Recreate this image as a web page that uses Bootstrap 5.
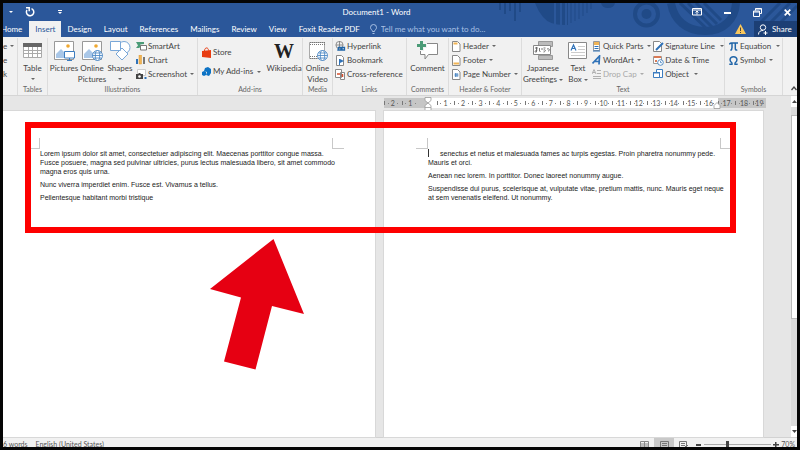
<!DOCTYPE html>
<html lang="en">
<head>
<meta charset="utf-8">
<meta name="viewport" content="width=device-width, initial-scale=1">
<title>Document1 - Word</title>
<link href="https://cdn.jsdelivr.net/npm/bootstrap@5.3.0/dist/css/bootstrap.min.css" rel="stylesheet">
<style>
:root{--word:#2b579a;--ink:#444}
body{font-family:Lato,"Open Sans",sans-serif;font-size:8px;line-height:11px;color:var(--ink);background:#000}
.app{height:100vh;border:3px solid #050505;background:#f1f1f1}
button{border:0;background:none;padding:0;color:inherit;font:inherit;white-space:nowrap}
svg{display:block;flex:none}
.topbar{background:var(--word);color:#fff}
.art{right:0;top:0;height:34px;width:310px}
.titlebar{height:18px}
.side{flex:1 1 0}
.quick{gap:10px;padding-left:4px;margin-right:-45px}
.quick .last-item{margin-left:12px}
.winctl{gap:22px;padding-right:6px}
.tabs{height:16px}
.tab{padding:0 6px;height:16px;color:#fff;text-decoration:none;display:flex;align-items:center}
.tab.home{padding:0 7px 0 0;margin-left:-2px}
.tab.active{background:#f1f1f1;color:var(--word)}
.tell{border:0;background:none;color:#fff;font:inherit;padding:0;width:120px;outline:0}
.tell::placeholder{color:#a9c0e4;opacity:1}
.share{background:#1c3f75;width:43px}
.ribbon{display:grid;grid-template-columns:minmax(0,15fr) minmax(0,30fr) minmax(0,150fr) minmax(0,105fr) minmax(0,30fr) minmax(0,74fr) minmax(0,42fr) minmax(0,73fr) minmax(0,203fr) minmax(0,58fr) minmax(0,14fr);height:59px;border-bottom:1px solid #d5d5d5;padding-top:1px}
.group{display:flex;flex-direction:column;border-right:1px solid #dcdcdc;min-width:0}
.group:last-child{border:0}
.tools{display:flex;height:47px;padding-top:1px}
.tools.near{padding-left:2px}
.caption{font-size:7px;line-height:9px;text-align:center;color:#666;white-space:nowrap}
.big{display:flex;flex-direction:column;align-items:center;width:28px;padding-top:2px}
.big.wide{width:42px}
.big.wiki{width:36px}
.big svg{margin-bottom:2px}
.big span{display:block;white-space:nowrap}
.big .serif-w{font:bold 20px/20px "Liberation Serif",serif;color:#222;margin-bottom:2px}
.stack button{display:flex;align-items:center;height:14px;gap:1px}
.stack.tall button{height:19px;gap:2px}
.stack.tall{padding-top:4px}
.stack.shift{margin-left:2px}
.caret{display:inline-block;border:2px solid transparent;border-top-color:#666;border-bottom:0;width:4px;height:2px;margin-left:2px;vertical-align:middle}
.big .caret{margin:4px 0 0}
.big span .caret{margin:0 0 0 2px}
.off{color:#a9a9a9}
.work{background:#e6e6e6;min-height:0}
.rulerrow{display:grid;grid-template-columns:381fr 382fr 25fr;height:15px;padding-top:2px}
.ruler{display:flex;height:10px;font-size:7px;line-height:10px;text-align:center;color:#555}
.ruler span{flex:4 1 0;min-width:0;background:linear-gradient(#777,#777) 0 50%/1px 4px no-repeat,linear-gradient(#888,#888) 22% 50%/1px 1px no-repeat,linear-gradient(#888,#888) 80% 50%/1px 1px no-repeat,#fff}
.ruler .out{background-color:#c6c6c6}
.ruler .zero{background:linear-gradient(90deg,#c6c6c6 50%,#fff 50%)}
.ruler .zero svg{margin:-1px auto 0}
.ruler .edge{display:flex}
.ruler .edge svg{margin:4px 0 0 -5px}
.ruler .edge b{font-weight:400;flex:1;margin-left:-3px}
.ruler .last{flex-grow:3}
.pages{display:grid;grid-template-columns:372fr 9fr 379fr 28fr;min-height:0}
.sheet{background:#fff;font-family:"Liberation Sans",Arial,sans-serif;font-size:7px;line-height:9px;color:#222;padding:27px 0 0 25px;box-shadow:0 0 0 1px #d8d8d8}
.sheet.right{padding-left:32px}
.sheet p{margin:0 0 4px 12px;white-space:nowrap}
.crops{display:flex;justify-content:space-between;width:316px;height:11px}
.crops i{width:12px;border:1px solid #c8c8c8;border-width:0 1px 1px 0}
.crops i+i{border-width:0 0 1px 1px}
.cursor{display:inline-block;width:1px;height:8px;background:#333;margin-right:11px;vertical-align:top}
.scroller{width:6px;background:#dadada}
.scroller button{height:11px;background:#fff;display:flex;align-items:center;justify-content:center}
.thumb{background:#fff;border:1px solid #bbb;border-right:0;height:204px;margin-top:8px}
.status{height:10px;border-top:1px solid #d2d2d2;font-size:7px;line-height:13px;overflow:hidden;color:#555}
.status button{height:13px;display:flex;align-items:center;justify-content:center}
.view{width:20px}
.view.on{background:#c9c9c9}
.zoomgroup{gap:2px;padding-right:2px}
.zoomer{appearance:none;width:67px;height:13px;background:linear-gradient(#aaa,#aaa) 50% 50%/100% 1px no-repeat;margin:0}
.zoomer::-webkit-slider-thumb{appearance:none;width:3px;height:7px;background:#444}
.frame-note{left:22px;right:61px;top:26px;height:111px;border:6px solid #fe0000;pointer-events:none}
.arrow-note{left:207px;top:142px;pointer-events:none}
</style>
<script src="https://cdn.jsdelivr.net/npm/bootstrap@5.3.0/dist/js/bootstrap.bundle.min.js"></script>
</head>
<body>
<div class="app d-flex flex-column overflow-hidden">
<header class="topbar position-relative">
  <svg class="art position-absolute" viewBox="487 3 310 34" fill="none" stroke="#204a87" aria-hidden="true">
    <path stroke-width="2" d="M500 3v7M505 3v11M510 3v8M515 3v18M520 3v9"/>
    <path fill="#204a87" stroke="none" d="M535 3h33v22q-18 1-25-8q-5-6-8-14zM601 3h14q-1 5-7 5t-7-5z"/>
    <path stroke-width="1" d="M571 3v20M575 3v18M579 3v16M583 3v13M587 3v10M591 3v6"/>
    <path stroke="#2b579a" stroke-width="2" d="M555 3v24M561 3v24M566 3v24"/>
    <circle cx="646.500" cy="14" r="11.500" stroke-width="4"/><circle cx="646.500" cy="14" r="5" fill="#204a87" stroke="none"/>
    <path stroke-width="8" d="M671 3c3 17 15 28 34 28s30-12 31-28"/>
    <path stroke-width="3" d="M680 3l28 27M688 3l24 24M696 3l21 21M704 3l17 17M759 24l21-21M767 26l23-23M775 28l22-22"/>
  </svg>
  <div class="titlebar d-flex align-items-center position-relative">
    <div class="side quick d-flex align-items-center">
      <button aria-label="Undo options"><svg width="8" height="6"><path fill="#fff" d="M2 2h4L4 4z"/></svg></button>
      <button aria-label="Repeat"><svg width="10" height="10" viewBox="0 0 10 10" fill="none" stroke="#fff" stroke-width="1.500"><path d="M6.500 1.600A3.700 3.700 0 1 1 2 3M1 .8h3.200v3.400"/></svg></button>
      <button class="last-item" aria-label="Customize toolbar"><svg width="6" height="7"><path fill="#fff" d="M1 1h4v1H1zM1 3h4L3 5z"/></svg></button>
    </div>
    <div>Document1 - Word</div>
    <div class="side winctl d-flex justify-content-end align-items-center">
      <button aria-label="Ribbon display options"><svg width="10" height="8" viewBox="0 0 10 8" fill="none" stroke="#fff"><path d="M.5.500h9v6.500h-9zM.5 2h9M5 6.500V3M3.500 4.500L5 3l1.500 1.500"/></svg></button>
      <button aria-label="Minimize"><svg width="7" height="8"><path fill="#fff" d="M0 4h7v2H0z"/></svg></button>
      <button aria-label="Restore"><svg width="9" height="9" viewBox="0 0 9 9" fill="none" stroke="#fff"><path d="M2.500 2.500v-2h6v5h-2M.5 3h6v5.500h-6zM.5 4h6M2.500 1h6"/></svg></button>
      <button aria-label="Close"><svg width="7" height="7" viewBox="0 0 7 7" stroke="#fff" stroke-width="1.700"><path d="M.7.7l5.600 5.600M6.300.7L.7 6.300"/></svg></button>
    </div>
  </div>
  <nav class="tabs d-flex position-relative" aria-label="Ribbon tabs">
    <a class="tab home" href="#">Home</a><a class="tab active" href="#" aria-current="page">Insert</a><a class="tab" href="#">Design</a><a class="tab" href="#">Layout</a><a class="tab" href="#">References</a><a class="tab" href="#">Mailings</a><a class="tab" href="#">Review</a><a class="tab" href="#">View</a><a class="tab" href="#">Foxit Reader PDF</a>
    <label class="d-flex align-items-center gap-1 ms-1"><svg width="7" height="11" viewBox="0 0 7 11" fill="none" stroke="#a9c0e4"><path d="M2.500 7.500c0-1.500-2-2-2-4a3 3 0 0 1 6 0c0 2-2 2.500-2 4zM2.500 9.500h2"/></svg><input class="tell" placeholder="Tell me what you want to do..." aria-label="Tell me what you want to do"></label>
    <div class="d-flex align-items-center ms-auto">
      <svg class="me-2" width="11" height="10" viewBox="0 0 11 10"><path fill="#f8c65c" d="M5.500 0L11 10H0z"/><path stroke="#444" d="M5.500 3.500V7M5.500 8v1"/></svg>
      <button class="share h-100 d-flex align-items-center gap-1 ps-1"><svg width="10" height="11" viewBox="0 0 10 11" fill="none" stroke="#fff"><circle cx="5" cy="3.500" r="2.700"/><path d="M.5 10.500c0-3 2-4 4.500-4M5.500 9h4M7.500 7v4"/></svg>Share</button>
    </div>
  </nav>
</header>

<section class="ribbon" aria-label="Insert ribbon">
  <div class="group"><div class="tools stack flex-column align-items-start">
    <button>e<i class="caret"></i></button><button>e</button><button>k</button></div></div>

  <div class="group"><div class="tools justify-content-center">
    <button class="big"><svg width="19" height="20" viewBox="0 0 19 20"><path fill="#fff" stroke="#aaa" d="M.5 3.500h18v13H.5z"/><path fill="#666" d="M0 2h19v4H0z"/><path stroke="#aaa" d="M1 9.500h17M1 12.500h17M5.500 6v10M9.500 6v10M14.500 6v10"/></svg><span>Table</span><i class="caret"></i></button></div>
    <div class="caption">Tables</div></div>

  <div class="group"><div class="tools near">
    <button class="big"><svg width="21" height="20" viewBox="0 0 21 20"><path fill="#fff" stroke="#999" d="M.5.500h19v18H.5z"/><circle cx="14" cy="5" r="1.800" fill="#f0a830"/><path fill="#a9c7e8" d="M2 17v-4l5-5 4 4v5z"/><path fill="#fff" stroke="#3c7dc0" d="M10.500 10.500h10v6.500h-10zM15.500 17v2M13 19.500h5"/></svg><span>Pictures</span></button>
    <button class="big"><svg width="21" height="20" viewBox="0 0 21 20"><path fill="#fff" stroke="#999" d="M.5.500h19v18H.5z"/><circle cx="14" cy="5" r="1.800" fill="#f0a830"/><path fill="#a9c7e8" d="M2 17v-4l5-5 4 4v5z"/><g fill="#fff" stroke="#3c7dc0" stroke-width=".8"><circle cx="15.500" cy="14.500" r="5"/><ellipse cx="15.500" cy="14.500" rx="2.200" ry="5"/><path d="M10.500 14.500h10M11.500 12h8M11.500 17h8"/></g></svg><span>Online</span><span>Pictures</span></button>
    <button class="big"><svg width="21" height="20" viewBox="0 0 21 20" fill="#fff" stroke="#79a7d8"><circle cx="14" cy="6.500" r="6"/><path d="M.5.500h10v9H.5zM12 7l6 6-6 6-6-6z"/></svg><span>Shapes</span><i class="caret"></i></button>
    <div class="stack shift">
      <button><svg width="11" height="10" viewBox="0 0 11 10"><path fill="#4b9b77" d="M0 1h8v2l-4 .5L6 5 3 7H0l2-2.500z"/><path fill="#fff" stroke="#777" d="M4.500 4.500h6V9h-6z"/></svg>SmartArt</button>
      <button><svg width="11" height="10" viewBox="0 0 11 10"><path fill="#2f72b8" d="M0 4h2v5H0z"/><path fill="#f1b455" stroke="#dc9a30" stroke-width=".5" d="M3 0h2.500v9H3z"/><path fill="#777" d="M7 2h2v7H7z"/></svg>Chart</button>
      <button><svg width="11" height="11" viewBox="0 0 11 11"><path fill="#fff" stroke="#ccc" d="M1.500.500h8v6h-8z"/><path fill="#444" d="M0 5h2l1-1h1l1 1h2v5H0z"/><circle cx="3.500" cy="7.500" r="1.300" fill="#fff"/><path fill="#2f72b8" d="M8.500 8h2v2h-2z"/></svg>Screenshot<i class="caret"></i></button>
    </div></div>
    <div class="caption">Illustrations</div></div>

  <div class="group"><div class="tools ps-1">
    <div class="stack tall">
      <button><svg width="9" height="11" viewBox="0 0 9 11"><path fill="#e83c12" d="M0 4l9-1v8l-9-1z"/><path fill="none" stroke="#e83c12" d="M2.500 4c0-4 4-4 4-.5"/></svg>Store</button>
      <button><svg width="9" height="10" viewBox="0 0 9 10"><path fill="#0d73c5" d="M3 1l3-1 3 2v4L7 9l-3-1 1-3-3-1zM0 5l2-1 2 1v3l-2 1-2-1z"/></svg>My Add-ins<i class="caret"></i></button>
    </div>
    <button class="big wiki ms-auto"><span class="serif-w">W</span><span>Wikipedia</span></button></div>
    <div class="caption">Add-ins</div></div>

  <div class="group"><div class="tools justify-content-center">
    <button class="big"><svg width="20" height="20" viewBox="0 0 20 20"><path fill="#fff" stroke="#aaa" d="M1.500 1.500h15v16h-15z"/><path stroke="#777" stroke-dasharray="1 1" d="M2 1.500h15M2 3.500h15M2 15.500h8M2 17.500h8"/><g fill="#fff" stroke="#3c7dc0" stroke-width=".8"><circle cx="14.500" cy="14.500" r="5"/><ellipse cx="14.500" cy="14.500" rx="2.200" ry="5"/><path d="M9.500 14.500h10M10.500 12h8M10.500 17h8"/></g></svg><span>Online</span><span>Video</span></button></div>
    <div class="caption">Media</div></div>

  <div class="group"><div class="tools near"><div class="stack">
      <button><svg width="11" height="10" viewBox="0 0 11 10" fill="none"><g stroke="#777" stroke-width=".8"><circle cx="4.500" cy="4" r="3.600"/><path d="M1 4h7M4.500 0v7.500"/></g><path stroke="#2065a8" stroke-width="1.300" d="M3.500 6.500h2.500v2.500H3zM7 6.500h2.500v2.500H7z"/></svg>Hyperlink</button>
      <button><svg width="11" height="11" viewBox="0 0 11 11"><path fill="#fff" stroke="#888" d="M1.500.500h5l2 2v8h-7z"/><path fill="#2f72b8" d="M4 4h1v6H4zM5 4l4 2-4 2z"/></svg>Bookmark</button>
      <button><svg width="11" height="11" viewBox="0 0 11 11"><path fill="#fff" stroke="#888" d="M.5.500h6v8h-6zM5.500 3.500h4v7h-4z"/><path stroke="#d8502e" stroke-width="1.500" d="M2 5h3M7.500 5v3"/></svg>Cross-reference</button>
    </div></div>
    <div class="caption">Links</div></div>

  <div class="group"><div class="tools justify-content-center">
    <button class="big"><svg width="21" height="20" viewBox="0 0 21 20"><path fill="#fff" stroke="#888" d="M3.500 2.500h17v11h-9L8 18v-4.500H3.500z"/><path stroke="#f1f1f1" stroke-width="5" d="M4.500 0v10M0 4.500h10"/><path stroke="#4b9b77" stroke-width="3" d="M4.500 0v9M0 4.500h9"/></svg><span>Comment</span></button></div>
    <div class="caption">Comments</div></div>

  <div class="group"><div class="tools near"><div class="stack">
      <button><svg width="11" height="11" viewBox="-1 0 11 11"><path fill="#fff" stroke="#888" d="M.5.500h5l2.500 2.500v7.500H.5z"/><path fill="#f1b455" d="M1.500 1.500h4v2h-4z"/></svg>Header<i class="caret"></i></button>
      <button><svg width="11" height="11" viewBox="-1 0 11 11"><path fill="#fff" stroke="#888" d="M.5.500h5l2.500 2.500v7.500H.5z"/><path fill="#f1b455" d="M1.500 7.500h5.500v2H1.500z"/></svg>Footer<i class="caret"></i></button>
      <button><svg width="11" height="11" viewBox="-1 0 11 11"><path fill="#fff" stroke="#888" d="M.5.500h5l2.500 2.500v7.500H.5z"/><path stroke="#2f72b8" stroke-width=".7" d="M3.500 4v4M5 4v4M2.500 5.200h4M2.500 6.800h4"/></svg>Page Number<i class="caret"></i></button>
    </div></div>
    <div class="caption">Header &amp; Footer</div></div>

  <div class="group"><div class="tools">
    <button class="big wide"><svg width="20" height="20" viewBox="0 0 20 20"><path fill="#bbb" stroke="#999" d="M5.500.500h14v5h-14zM5.500 14.500h14v4h-14z"/><path fill="#fff" stroke="#888" d="M.5 4.500h17v9H.5z"/><path fill="none" stroke="#555" stroke-width=".8" d="M2 7h3M3.500 6v5c-2 1-2-2 1-2M6.500 7v3l1 1M9 7v2M10.500 7h2M10.500 9c3-1 2 2 0 2M14 8c3-1 3 2 1 2"/></svg><span>Japanese</span><span>Greetings<i class="caret"></i></span></button>
    <button class="big"><svg width="20" height="20" viewBox="0 0 20 20"><path fill="#fff" stroke="#888" d="M.5 1.500h18v16H.5z"/><path fill="none" stroke="#2f72b8" stroke-width="1.200" d="M3 9.500L5.500 4 8 9.500M4 7.500h3"/><path stroke="#ccc" d="M10 5.500h7M10 8.500h7M3 11.500h14M3 14.500h14"/></svg><span>Text</span><span>Box<i class="caret"></i></span></button>
    <div class="stack">
      <button><svg width="10" height="11" viewBox="0 0 10 11"><path fill="#fff" stroke="#999" d="M1.500.500h6v9h-6z"/><path fill="#f1b455" d="M2 1h5v3H2z"/><path stroke="#2f72b8" d="M2.500 5.500h4M2.500 7.500h4M1 10h7"/></svg>Quick Parts<i class="caret"></i></button>
      <button><svg width="10" height="10" viewBox="0 0 10 10" fill="none" stroke="#2f72b8" stroke-width="1.700"><path d="M.5 8.500L7.500 1l-.5 8.500M3 6.500h4"/></svg>WordArt<i class="caret"></i></button>
      <button class="off"><svg width="10" height="10" viewBox="0 0 10 10" fill="none" stroke="#b0b0b0"><path d="M0 5l2-4.500L4 5M1 3.500h2M5 1.500h4M5 4.500h4M1 7.500h8M1 9.500h8"/></svg>Drop Cap<i class="caret opacity-50"></i></button>
    </div>
    <div class="stack ms-auto">
      <button><svg width="11" height="11" viewBox="0 0 11 11"><path fill="#fff" stroke="#888" d="M.5.500h6l2 2v8h-8z"/><path stroke="#2f72b8" stroke-width="2" d="M3 9l7-7"/></svg>Signature Line<i class="caret ms-1"></i></button>
      <button><svg width="11" height="11" viewBox="0 0 11 11"><path fill="#fff" stroke="#999" d="M.5 1.500h8v7h-8z"/><path fill="#d97a55" d="M1 1h7v2H1zM2 5h2v2H2z"/><circle cx="7.500" cy="7.500" r="2.800" fill="#fff" stroke="#2f72b8" stroke-width=".8"/><path fill="none" stroke="#2f72b8" stroke-width=".7" d="M7.500 6v1.700H9"/></svg>Date &amp; Time</button>
      <button><svg width="11" height="10" viewBox="0 0 11 10"><path fill="#fff" stroke="#3c7dc0" d="M3.500.500h6v8h-6z"/><path fill="#fff" stroke="#3c7dc0" d="M.5 3.500h6v5h-6z"/><path fill="#3c7dc0" d="M0 3h7v1.500H0z"/></svg>Object<i class="caret ms-1"></i></button>
    </div></div>
    <div class="caption">Text</div></div>

  <div class="group"><div class="tools ps-1"><div class="stack">
      <button><svg width="10" height="9" viewBox="0 0 10 9" fill="none" stroke="#2065a8" stroke-width="1.500"><path d="M.3 2.500Q1 1 2.500 1H9M3 1v4.500q0 2-1.500 3M6.300 1v5.500q0 2 2 1.500"/></svg>Equation<i class="caret ms-1"></i></button>
      <button><svg width="10" height="9" viewBox="0 0 10 9" fill="none" stroke="#2065a8" stroke-width="1.400"><path d="M.3 8.200H3V7Q1 5.500 1 3.800 1.300.8 4.500.8T8 3.800Q8 5.500 6 7v1.200h2.700"/></svg>Symbol<i class="caret"></i></button>
    </div></div>
    <div class="caption">Symbols</div></div>

  <div class="group justify-content-end align-items-end"><button class="mb-1" aria-label="Collapse ribbon"><svg width="6" height="5" viewBox="0 0 6 5" fill="none" stroke="#444" stroke-width="1.300"><path d="M.5 4L3 1l2.500 3"/></svg></button></div>
</section>

<main class="work d-flex flex-grow-1 position-relative">
  <div class="d-flex flex-column flex-grow-1">
    <div class="rulerrow"><div></div>
      <div class="ruler"><span class="out">2</span><span class="out">1</span><span class="zero"><svg width="8" height="14" viewBox="0 0 8 14" fill="#fff" stroke="#999" stroke-width=".8"><path d="M1 .5h6v3L4 6 1 3.500zM4 6l3 2.500v5H1v-5zM1 10.500h6"/></svg></span><span>1</span><span>2</span><span>3</span><span>4</span><span>5</span><span>6</span><span>7</span><span>8</span><span>9</span><span>10</span><span>11</span><span>12</span><span>13</span><span>14</span><span>15</span><span>16</span><span class="out edge"><svg width="8" height="8" viewBox="0 0 8 8" fill="#fff" stroke="#999" stroke-width=".8"><path d="M4 .5l3 3v3H1v-3z"/></svg><b>17</b></span><span class="out">18</span><span class="out last">19</span></div>
    </div>
    <div class="pages flex-grow-1">
      <article class="sheet">
        <div class="crops"><i></i><i></i></div>
        <p>Lorem ipsum dolor sit amet, consectetuer adipiscing elit. Maecenas porttitor congue massa.<br>Fusce posuere, magna sed pulvinar ultricies, purus lectus malesuada libero, sit amet commodo<br>magna eros quis urna.</p>
        <p>Nunc viverra imperdiet enim. Fusce est. Vivamus a tellus.</p>
        <p>Pellentesque habitant morbi tristique</p>
      </article>
      <div></div>
      <article class="sheet right">
        <div class="crops"><i></i><i></i></div>
        <p><span class="cursor"></span>senectus et netus et malesuada fames ac turpis egestas. Proin pharetra nonummy pede.<br>Mauris et orci.</p>
        <p>Aenean nec lorem. In porttitor. Donec laoreet nonummy augue.</p>
        <p>Suspendisse dui purus, scelerisque at, vulputate vitae, pretium mattis, nunc. Mauris eget neque<br>at sem venenatis eleifend. Ut nonummy.</p>
      </article>
    </div>
  </div>
  <div class="scroller d-flex flex-column">
    <button aria-label="Scroll up"><svg width="5" height="4"><path fill="#444" d="M0 3h5L2.500 0z"/></svg></button>
    <div class="thumb"></div>
    <button class="mt-auto" aria-label="Scroll down"><svg width="5" height="4"><path fill="#444" d="M0 0h5L2.500 3z"/></svg></button>
  </div>
  <div class="frame-note position-absolute"></div>
  <svg class="arrow-note position-absolute" width="95" height="132" viewBox="210 238 95 132"><path fill="#e60012" d="M273.500 239L304 314l-32-8-16.500 63.500-31.500-8 17-64-31-8.500z"/></svg>
</main>

<footer class="status d-flex">
  <span>6 words</span><span class="ms-2">English (United States)</span>
  <div class="zoomgroup d-flex ms-auto">
    <div class="d-flex">
    <button class="view" aria-label="Read mode"><svg width="9" height="8" fill="none" stroke="#888"><path d="M.5.500h8v7h-8zM4.500 0v8M1 3h7M1 5h7"/></svg></button>
    <button class="view on" aria-label="Print layout"><svg width="9" height="8" fill="none" stroke="#777"><path d="M.5.500h8v7h-8zM2 2.500h5M2 4.500h5M2 6.500h5"/></svg></button>
    <button class="view" aria-label="Web layout"><svg width="10" height="8" fill="none" stroke="#777"><path d="M.5.500h7v6h-7zM2 2.500h4M2 4.500h3M5 4l4 4M9 4L5 8"/></svg></button>
    </div>
    <button aria-label="Zoom out"><svg width="6" height="6"><path fill="#444" d="M0 2h5v2H0z"/></svg></button>
    <input class="zoomer" type="range" min="0" max="100" value="34" aria-label="Zoom level">
    <button aria-label="Zoom in"><svg width="6" height="6"><path fill="#444" d="M0 2h6v1.500H0zM2 0h1.500v6H2z"/></svg></button>
    <button>70%</button>
  </div>
</footer>
</div>
</body>
</html>
